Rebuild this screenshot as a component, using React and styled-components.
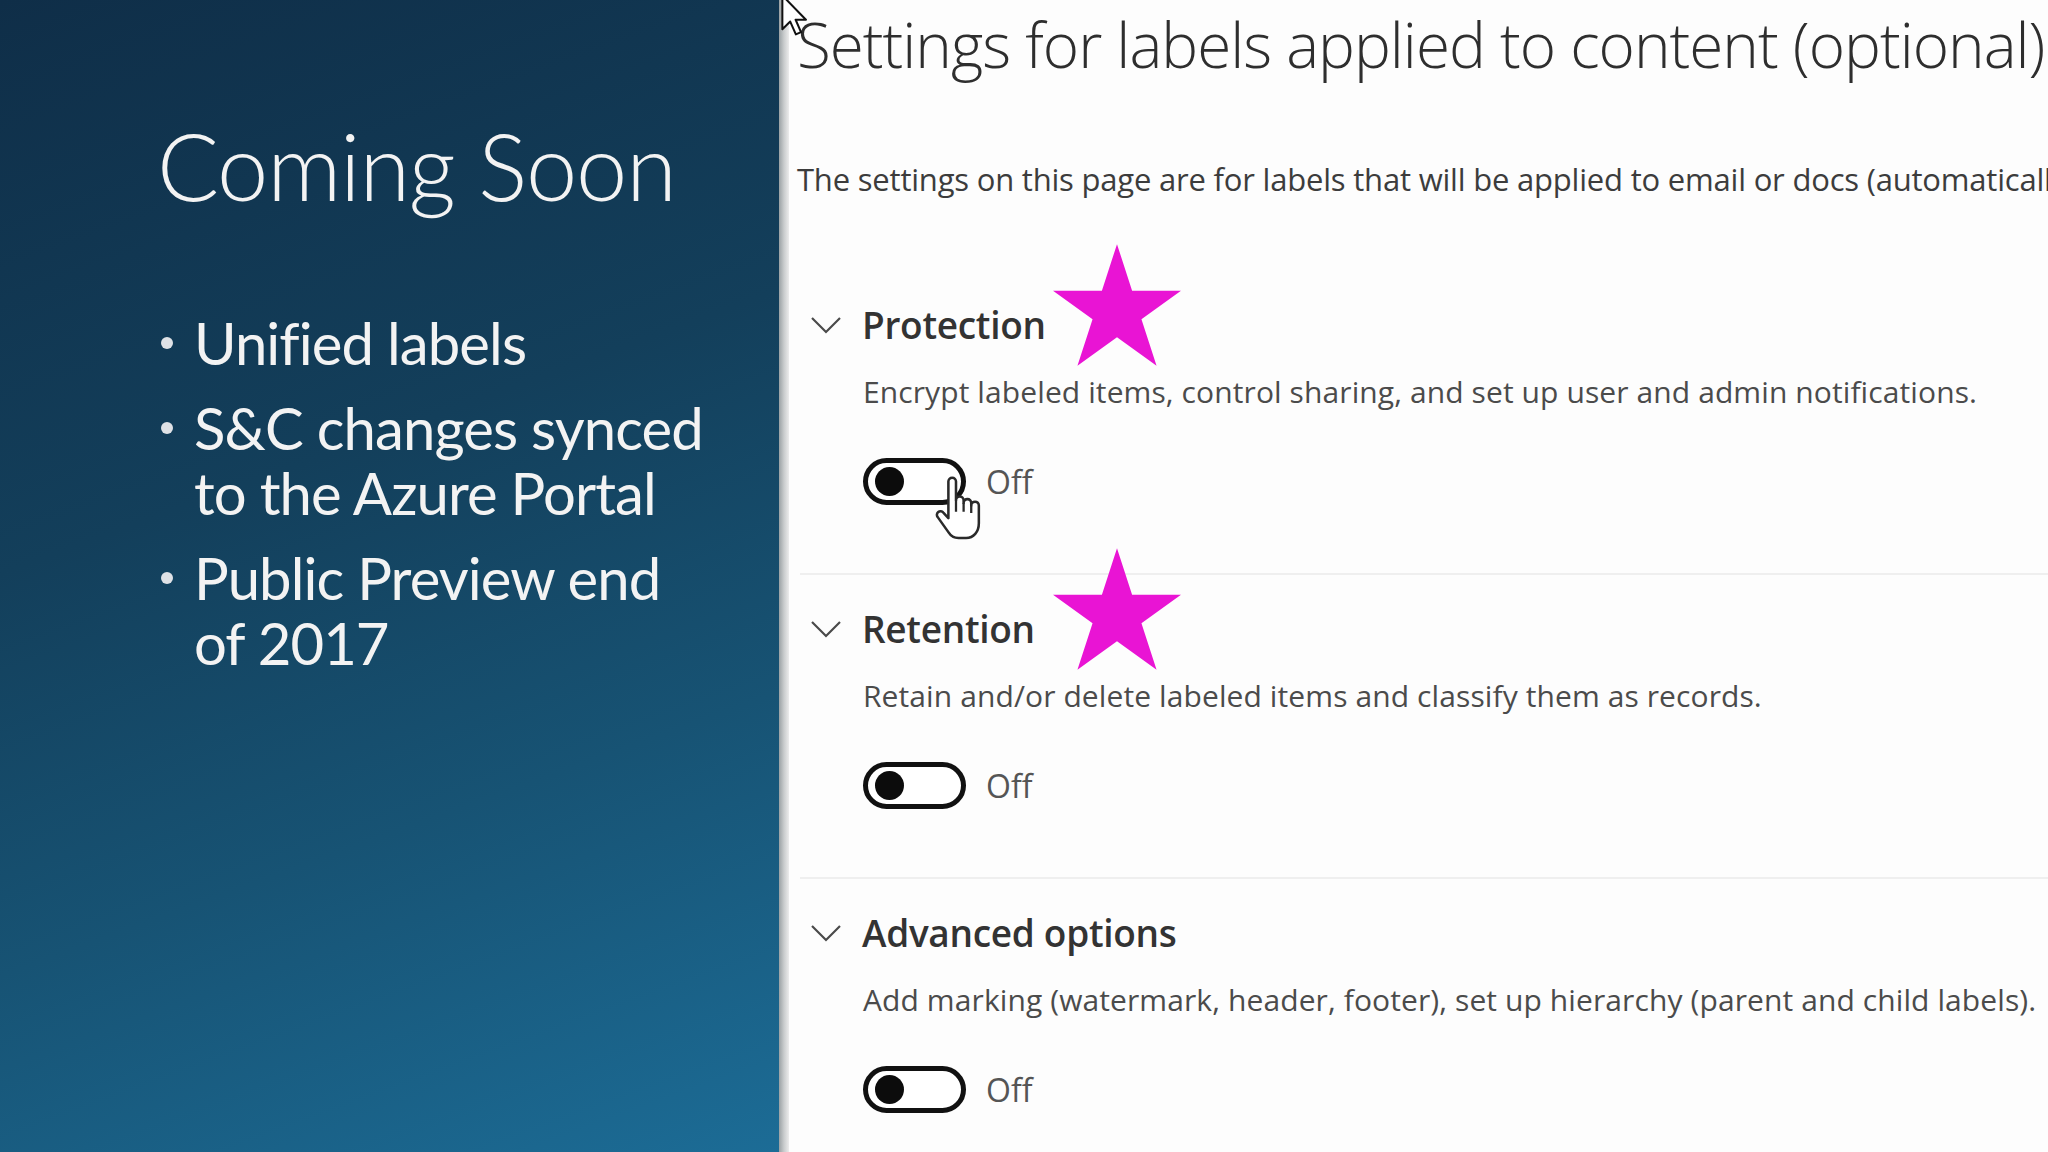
import React from 'react';
import styled, { createGlobalStyle } from 'styled-components';

const GlobalStyle = createGlobalStyle`
  html, body {
    margin: 0;
    padding: 0;
  }
  body {
    width: 2048px;
    height: 1152px;
    overflow: hidden;
    background: #fdfdfd;
  }
`;

const Page = styled.div`
  position: relative;
  display: flex;
  width: 2048px;
  height: 1152px;
  overflow: hidden;
`;

/* ---------- slide on the left ---------- */

const Slide = styled.section`
  flex: 0 0 779px;
  box-sizing: border-box;
  padding: 111px 0 0 157px;
  background: linear-gradient(160deg, #0f2e48 0%, #133f5b 40%, #175374 68%, #1c6c96 100%);
  font-family: Lato, "Liberation Sans", sans-serif;
  color: #f3f3f3;
`;

const SlideTitle = styled.h1`
  margin: 0;
  font-size: 92px;
  font-weight: 300;
  line-height: 1.2;
  letter-spacing: -1.2px;
`;

const Bullets = styled.ul`
  display: flex;
  flex-direction: column;
  gap: 20px;
  margin: 89px 0 0;
  padding: 0;
  list-style: none;
`;

const Bullet = styled.li`
  display: flex;
  font-size: 58px;
  line-height: 65px;
  letter-spacing: -0.9px;
  white-space: nowrap;

  &::before {
    content: '';
    flex: none;
    width: 12px;
    height: 12px;
    margin: 27px 21px 0 4px;
    border-radius: 50%;
    background: #dfe2e6;
  }
`;

/* ---------- portal on the right ---------- */

const Edge = styled.div`
  flex: 0 0 10px;
  background: linear-gradient(90deg, #9aa1a4 0%, #c9cccd 50%, #ececec 100%);
`;

const Portal = styled.main`
  flex: 1;
  min-width: 0;
  overflow: hidden;
  box-sizing: border-box;
  padding: 4px 0 0 8px;
  background: #fdfdfd;
  font-family: "Open Sans", "Noto Sans", sans-serif;
`;

const Heading = styled.h2`
  margin: 0;
  font-size: 62px;
  font-weight: 300;
  line-height: 80px;
  letter-spacing: -1px;
  color: #2e2e2e;
  white-space: nowrap;
`;

const Intro = styled.p`
  margin: 75px 0 0;
  font-size: 31px;
  line-height: 40px;
  letter-spacing: -0.2px;
  color: #3c3c3c;
  white-space: nowrap;
`;

const Sections = styled.div`
  margin-top: 72px;
`;

const Section = styled.div`
  margin-left: 3px;
  padding: 29px 0 68px 10px;
  border-bottom: 2px solid #efefef;
`;

const Header = styled.div`
  position: relative;
  display: flex;
  align-items: center;
  gap: 20px;
  height: 50px;
`;

const Chevron = styled.svg`
  flex: none;
  width: 32px;
  height: 18px;
`;

const SectionTitle = styled.h3`
  margin: 0;
  font-size: 37px;
  font-weight: 600;
  line-height: 50px;
  letter-spacing: -0.3px;
  color: #333;
`;

const Body = styled.div`
  padding-left: 53px;
`;

const Description = styled.p`
  margin: 22px 0 0;
  font-size: 30px;
  line-height: 40px;
  letter-spacing: 0.1px;
  color: #4b4b4b;
  white-space: nowrap;
`;

const ToggleRow = styled.div`
  display: flex;
  align-items: center;
  gap: 20px;
  margin-top: 46px;
`;

const Toggle = styled.div`
  position: relative;
  box-sizing: border-box;
  width: 103px;
  height: 47px;
  border: 5px solid #111;
  border-radius: 24px;
  background: #fff;

  &::before {
    content: '';
    position: absolute;
    left: 7px;
    top: 4px;
    width: 29px;
    height: 29px;
    border-radius: 50%;
    background: #0c0c0c;
  }
`;

const ToggleLabel = styled.span`
  font-size: 32px;
  line-height: 1;
  color: #555;
`;

const Star = styled.svg`
  position: absolute;
  left: 243px;
  top: -56px;
  width: 128px;
  height: 122px;
`;

const HandCursor = styled.svg`
  position: absolute;
  left: 61px;
  top: 12px;
  width: 54px;
  height: 66px;
`;

const ArrowCursor = styled.svg`
  position: absolute;
  left: 781px;
  top: -6px;
  width: 27px;
  height: 43px;
`;

const starPoints = Array.from({ length: 10 }, (_, i) => {
  const a = ((-90 + 36 * i) * Math.PI) / 180;
  const r = i % 2 === 0 ? 1 : 0.382;
  return `${(r * Math.cos(a)).toFixed(4)},${(r * Math.sin(a)).toFixed(4)}`;
}).join(' ');

const MagentaStar = () => (
  <Star viewBox="-0.951 -1 1.902 1.809">
    <polygon points={starPoints} fill="#e914d4" />
  </Star>
);

const Hand = () => (
  <HandCursor viewBox="0 0 20 26">
    <path
      d="M7 17V2.6a1.5 1.5 0 0 1 3 0V10a1.5 1.5 0 0 1 3 0v1a1.5 1.5 0 0 1 3 0v1a1.5 1.5 0 0 1 3 0v7c0 3.4-2.1 5.8-5 5.8h-3c-2 0-3.2-1-4-2.3L2.8 16.6a1.4 1.4 0 0 1 2.2-1.8L7 17z"
      fill="#fff"
      stroke="#2a2a2a"
      strokeWidth="1"
      strokeLinejoin="round"
    />
    <path d="M10 10v4.5M13 11v3.5M16 12v3" stroke="#2a2a2a" strokeWidth="0.9" fill="none" />
  </HandCursor>
);

const sections = [
  {
    title: 'Protection',
    text: 'Encrypt labeled items, control sharing, and set up user and admin notifications.',
    star: true,
    hand: true,
  },
  {
    title: 'Retention',
    text: 'Retain and/or delete labeled items and classify them as records.',
    star: true,
  },
  {
    title: 'Advanced options',
    text: 'Add marking (watermark, header, footer), set up hierarchy (parent and child labels).',
  },
];

const App = () => (
  <>
    <GlobalStyle />
    <Page>
      <Slide>
        <SlideTitle>Coming Soon</SlideTitle>
        <Bullets>
          <Bullet>Unified labels</Bullet>
          <Bullet>
            <span>
              S&amp;C changes synced
              <br />
              to the Azure Portal
            </span>
          </Bullet>
          <Bullet>
            <span>
              Public Preview end
              <br />
              of 2017
            </span>
          </Bullet>
        </Bullets>
      </Slide>
      <Edge />
      <Portal>
        <Heading>Settings for labels applied to content (optional)</Heading>
        <Intro>
          The settings on this page are for labels that will be applied to email or docs (automatically or manually).
        </Intro>
        <Sections>
          {sections.map((s) => (
            <Section key={s.title}>
              <Header>
                <Chevron viewBox="0 0 32 18">
                  <polyline points="2,2 16,16 30,2" fill="none" stroke="#4a4a4a" strokeWidth="2.2" />
                </Chevron>
                <SectionTitle>{s.title}</SectionTitle>
                {s.star && <MagentaStar />}
              </Header>
              <Body>
                <Description>{s.text}</Description>
                <ToggleRow>
                  <Toggle>{s.hand && <Hand />}</Toggle>
                  <ToggleLabel>Off</ToggleLabel>
                </ToggleRow>
              </Body>
            </Section>
          ))}
        </Sections>
      </Portal>
      <ArrowCursor viewBox="0 0 12 19">
        <path
          d="M0.6 0.6V15.6L4.1 12.2L6.6 17.9L8.9 16.9L6.5 11.4H11.1Z"
          fill="#fff"
          stroke="#111"
          strokeWidth="0.9"
          strokeLinejoin="round"
        />
      </ArrowCursor>
    </Page>
  </>
);

export default App;
